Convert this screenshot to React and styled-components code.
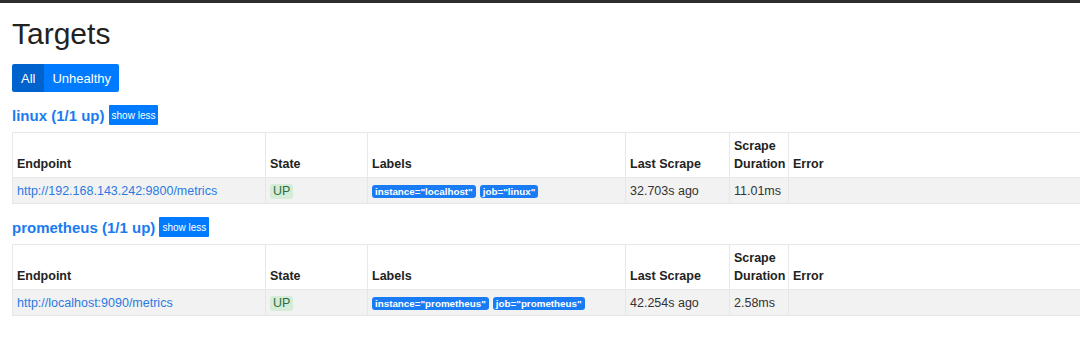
import React from "react";
import styled, { createGlobalStyle } from "styled-components";

const pools = [
  {
    name: "linux",
    endpoint: "http://192.168.143.242:9800/metrics",
    labels: ['instance="localhost"', 'job="linux"'],
    lastScrape: "32.703s ago",
    duration: "11.01ms",
  },
  {
    name: "prometheus",
    endpoint: "http://localhost:9090/metrics",
    labels: ['instance="prometheus"', 'job="prometheus"'],
    lastScrape: "42.254s ago",
    duration: "2.58ms",
  },
];

const App = () => {
  return (
    <>
      <GlobalStyle />
      <TopBar />
      <Page>
        <Title>Targets</Title>
        <ButtonGroup>
          <FilterButton active>All</FilterButton>
          <FilterButton>Unhealthy</FilterButton>
        </ButtonGroup>
        {pools.map((pool) => (
          <Section key={pool.name}>
            <PoolHeader>
              <PoolName href="#">{pool.name} (1/1 up)</PoolName>
              <ToggleButton>show less</ToggleButton>
            </PoolHeader>
            <Table>
              <colgroup>
                <col style={{ width: 253 }} />
                <col style={{ width: 102 }} />
                <col style={{ width: 258 }} />
                <col style={{ width: 104 }} />
                <col style={{ width: 59 }} />
                <col />
              </colgroup>
              <thead>
                <tr>
                  <Th>Endpoint</Th>
                  <Th>State</Th>
                  <Th>Labels</Th>
                  <Th>Last Scrape</Th>
                  <Th>Scrape Duration</Th>
                  <Th>Error</Th>
                </tr>
              </thead>
              <tbody>
                <Row>
                  <Td>
                    <EndpointLink href="#">{pool.endpoint}</EndpointLink>
                  </Td>
                  <Td>
                    <StateBadge>UP</StateBadge>
                  </Td>
                  <Td>
                    <Labels>
                      {pool.labels.map((l) => (
                        <LabelBadge key={l}>{l}</LabelBadge>
                      ))}
                    </Labels>
                  </Td>
                  <Td>{pool.lastScrape}</Td>
                  <Td>{pool.duration}</Td>
                  <Td />
                </Row>
              </tbody>
            </Table>
          </Section>
        ))}
      </Page>
    </>
  );
};

// Styled Components
const GlobalStyle = createGlobalStyle`
  body {
    margin: 0;
    background: #fff;
    font-family: "Liberation Sans", Arial, sans-serif;
    color: #212529;
    overflow: hidden;
  }
`;

const TopBar = styled.div`
  height: 3px;
  background: #2e2e2e;
`;

const Page = styled.div`
  padding: 0 0 0 12px;
`;

const Title = styled.h1`
  margin: 13px 0 0;
  font-size: 30px;
  font-weight: 400;
  line-height: 36px;
  color: #222;
`;

const ButtonGroup = styled.div`
  display: inline-flex;
  margin-top: 12px;
`;

const FilterButton = styled.button`
  height: 28px;
  padding: 0 ${(p) => (p.active ? "9px" : "8px")};
  border: none;
  border-radius: ${(p) => (p.active ? "2px 0 0 2px" : "0 2px 2px 0")};
  background: ${(p) => (p.active ? "#0062cc" : "#007bff")};
  color: #fff;
  font-family: inherit;
  font-size: 13px;
`;

const Section = styled.section``;

const PoolHeader = styled.div`
  display: flex;
  align-items: center;
  gap: 4px;
  margin-top: 13px;
  height: 20px;
`;

const PoolName = styled.a`
  color: #1a7bf0;
  font-size: 15px;
  font-weight: 700;
  text-decoration: none;
`;

const ToggleButton = styled.button`
  height: 20px;
  padding: 0 3px;
  border: none;
  border-radius: 1px;
  background: #007bff;
  color: #fff;
  font-family: inherit;
  font-size: 10px;
`;

const Table = styled.table`
  margin-top: 7px;
  width: 1100px;
  table-layout: fixed;
  border-collapse: collapse;
  font-size: 12.5px;
  line-height: 18px;
`;

const Th = styled.th`
  padding: 4px 4px 4px 4px;
  text-align: left;
  vertical-align: bottom;
  font-weight: 700;
  border: 1px solid #e8e8e8;
  color: #222;
`;

const Row = styled.tr`
  background: #f2f2f2;
`;

const Td = styled.td`
  padding: 4px 4px 3px 4px;
  border: 1px solid #e6e6e6;
  white-space: nowrap;
  color: #333;
`;

const EndpointLink = styled.a`
  color: #2a7ae2;
  text-decoration: none;
`;

const StateBadge = styled.span`
  display: inline-block;
  padding: 0 3px;
  border-radius: 3px;
  background: #d5ecd9;
  color: #2f6b3d;
  line-height: 15px;
`;

const Labels = styled.div`
  display: flex;
  gap: 4px;
`;

const LabelBadge = styled.span`
  display: inline-block;
  padding: 0 3px;
  border-radius: 3px;
  background: #1a7cf5;
  color: #fff;
  font-size: 9.8px;
  font-weight: 700;
  line-height: 13px;
`;

export default App;
